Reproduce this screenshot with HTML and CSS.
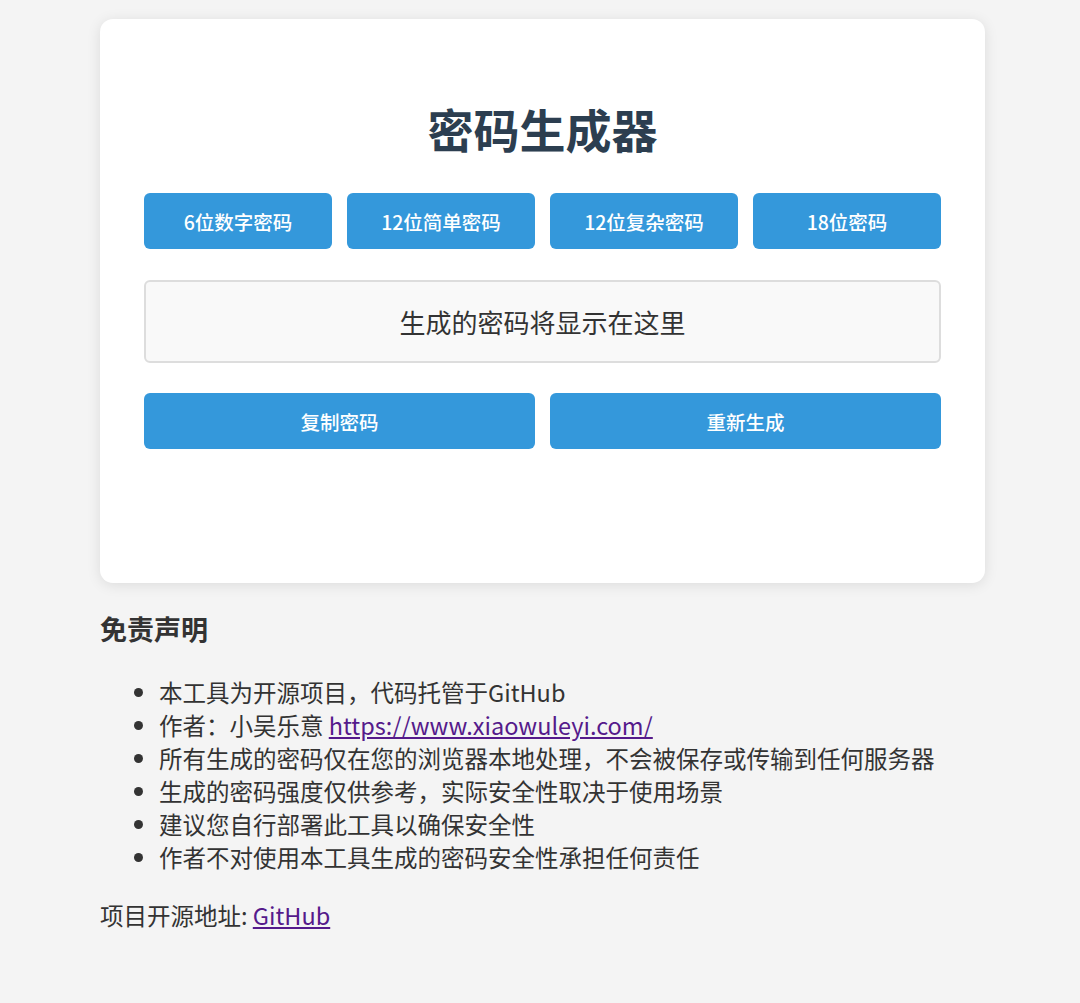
FILE: index.html
```html
<!DOCTYPE html>
<html lang="zh-CN">
<head>
    <meta charset="UTF-8" />
    <meta name="viewport" content="width=device-width, initial-scale=1.0" />
    <title>密码生成器</title>
    <link rel="stylesheet" href="styles.css">
</head>
<body>
    <div class="wrapper">
      <div class="container">
        <h1>密码生成器</h1>
        <div class="preset-buttons">
          <button class="btn">6位数字密码</button>
          <button class="btn">12位简单密码</button>
          <button class="btn">12位复杂密码</button>
          <button class="btn">18位密码</button>
        </div>
        <div class="password-display" id="passwordDisplay">生成的密码将显示在这里</div>
        <div class="action-buttons">
          <button class="btn">复制密码</button>
          <button class="btn">重新生成</button>
        </div>
      </div>

      <div class="disclaimer">
        <h3>免责声明</h3>
        <ul>
          <li>本工具为开源项目，代码托管于GitHub</li>
          <li>作者：小吴乐意 <a href="#" class="visited">https://www.xiaowuleyi.com/</a></li>
          <li>所有生成的密码仅在您的浏览器本地处理，不会被保存或传输到任何服务器</li>
          <li>生成的密码强度仅供参考，实际安全性取决于使用场景</li>
          <li>建议您自行部署此工具以确保安全性</li>
          <li>作者不对使用本工具生成的密码安全性承担任何责任</li>
        </ul>
        <p>项目开源地址: <a href="#" class="visited">GitHub</a></p>
      </div>
    </div>
</body>
</html>
```

FILE: styles.css
```css
* {
  box-sizing: border-box;
}

body {
  font-family: "Noto Sans CJK SC", "Noto Sans", sans-serif;
  background-color: #f4f4f4;
  color: #333;
  margin: 0;
  padding: 19px 0 40px 5px;
}

.wrapper {
  max-width: 885px;
  margin: 0 auto;
}

.container {
  background: #fff;
  border-radius: 13px;
  box-shadow: 0 2px 14px rgba(0, 0, 0, 0.1);
  padding: 44px 44px 134px;
}

h1 {
  font-size: 46px;
  line-height: 66px;
  color: #2c3e50;
  text-align: center;
  margin: 32px 0 32px;
  font-weight: bold;
}

.preset-buttons {
  display: grid;
  grid-template-columns: repeat(4, 1fr);
  gap: 15px;
}

.action-buttons {
  display: grid;
  grid-template-columns: repeat(2, 1fr);
  gap: 15px;
}

.btn {
  font-family: inherit;
  background: #3498db;
  color: #fff;
  border: none;
  border-radius: 6px;
  height: 56px;
  font-size: 19.5px;
  font-weight: 500;
  cursor: pointer;
}

.btn:hover {
  background: #2980b9;
}

.password-display {
  margin: 31px 0 30px;
  height: 83px;
  background: #f9f9f9;
  border: 2px solid #ddd;
  border-radius: 6px;
  display: flex;
  justify-content: center;
  align-items: center;
  font-size: 26px;
  color: #333;
}

.disclaimer {
  font-size: 23.5px;
  line-height: 33px;
  color: #333;
}

.disclaimer h3 {
  font-size: 27px;
  line-height: 38px;
  margin: 27px 0 28px;
}

.disclaimer ul {
  margin: 0 0 25px;
  padding-left: 59px;
}

.disclaimer p {
  margin: 0;
}

.disclaimer a {
  color: #0000ee;
}

.disclaimer a.visited {
  color: #551a8b;
}
```
